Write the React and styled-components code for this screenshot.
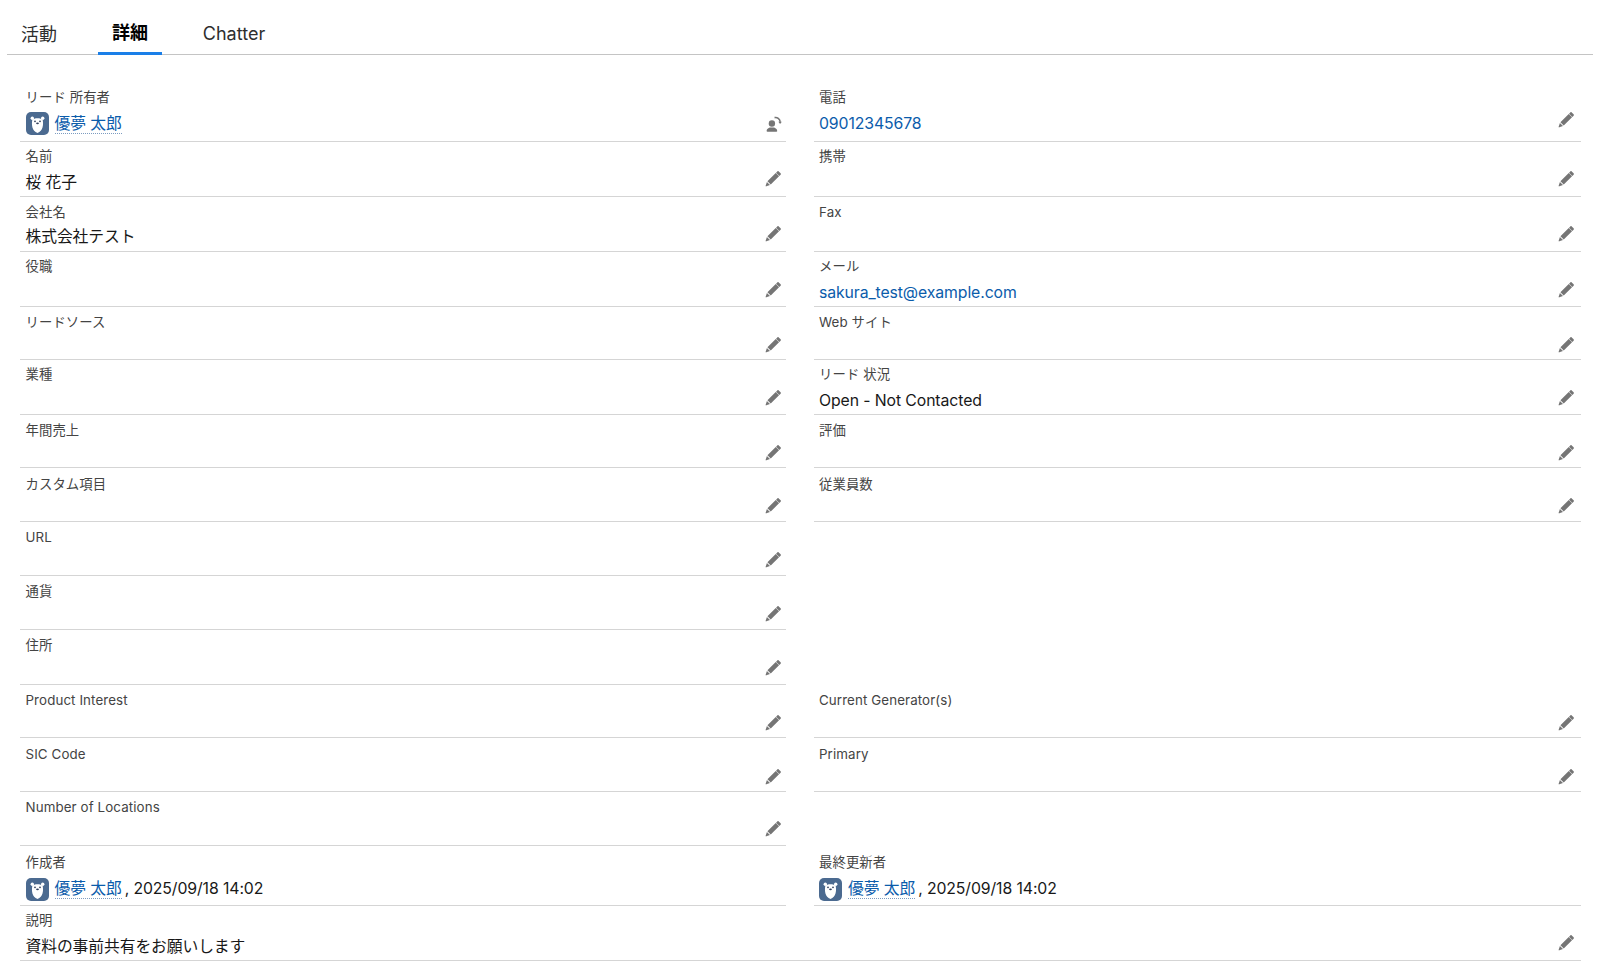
import React from 'react';
import styled, { createGlobalStyle } from 'styled-components';

const GlobalStyle = createGlobalStyle`
  html, body {
    margin: 0;
    padding: 0;
    background: #fff;
  }
  body {
    font-family: "Inter", "Liberation Sans", "Noto Sans CJK JP", sans-serif;
    color: #181818;
  }
`;

const Page = styled.div`
  width: 1600px;
  height: 969px;
  overflow: hidden;
  padding: 0 7px;
  box-sizing: border-box;
`;

const TabBar = styled.div`
  display: flex;
  height: 55px;
  box-sizing: border-box;
  padding: 0 0 0 14px;
  border-bottom: 1px solid #c4c4c4;
`;

const Tab = styled.div`
  width: ${({ $w }) => $w}px;
  height: 55px;
  box-sizing: border-box;
  display: flex;
  align-items: center;
  justify-content: ${({ $start }) => ($start ? 'flex-start' : 'center')};
  padding-top: ${({ $top }) => $top}px;
  font-size: 18px;
  color: ${({ $active }) => ($active ? '#000' : '#2e2e2e')};
  font-weight: ${({ $active }) => ($active ? 600 : 400)};
  border-bottom: ${({ $active }) => ($active ? '3px solid #1a7fe8' : 'none')};
`;

const Grid = styled.div`
  display: grid;
  grid-template-columns: 766px 767px;
  column-gap: 28px;
  padding: 28px 0 0 13px;
`;

const Row = styled.div`
  position: relative;
  height: ${({ $h }) => $h}px;
  box-sizing: border-box;
  border-bottom: ${({ $blank }) => ($blank ? 'none' : '1px solid #d5d5d5')};
  padding: ${({ $pad }) => $pad ?? 5}px 5px 0 ${({ $side }) => ($side ? 5 : 5.5)}px;
  ${({ $wide }) => $wide && 'grid-column: 1 / span 2;'}
`;

const Label = styled.div`
  font-size: 13.35px;
  letter-spacing: 0.1px;
  line-height: 18px;
  color: #444;
`;

const Value = styled.div`
  display: flex;
  align-items: center;
  font-size: 15.8px;
  letter-spacing: -0.1px;
  line-height: 24px;
  margin-top: ${({ $gap }) => $gap ?? 6}px;
  color: #181818;
`;

const Link = styled.span`
  color: #0b5cab;
`;

const OwnerLink = styled.span`
  color: #0b5cab;
  margin-left: 6px;
  border-bottom: 1px dotted #7d9cc0;
  line-height: 19px;
`;

const Stamp = styled.span`
  margin-left: 3px;
`;

const EditIcon = styled.svg`
  position: absolute;
  right: ${({ $side }) => ($side ? 6 : 4)}px;
  bottom: ${({ $bottom }) => $bottom ?? 8}px;
  width: 17px;
  height: 17px;
  fill: #757575;
`;

function Avatar() {
  return (
    <svg width="23" height="23" viewBox="0 0 23 23">
      <rect width="23" height="23" rx="5" fill="#4b6a90" />
      <circle cx="6.300" cy="6.300" r="1.700" fill="#fff" />
      <circle cx="16.700" cy="6.300" r="1.700" fill="#fff" />
      <path d="M6.300 8c1.800-2.300 8.600-2.300 10.400 0 .9 4.500.4 11-5.200 13-5.600-2-6.100-8.500-5.200-13z" fill="#fff" />
      <circle cx="9" cy="9.300" r=".9" fill="#33415c" />
      <circle cx="14" cy="9.300" r=".9" fill="#33415c" />
      <ellipse cx="11.500" cy="11.300" rx="1.400" ry=".9" fill="#33415c" />
    </svg>
  );
}

function Pencil({ side, bottom }) {
  return (
    <EditIcon viewBox="0 0 16 16" $side={side} $bottom={bottom}>
      <path d="M12.900 1.300l1.800 1.800c.4.4.4.900 0 1.300l-1.200 1.200-3.100-3.100 1.200-1.200c.4-.4.900-.4 1.300 0zM10.100 2.800l3.100 3.100-7.800 7.800-3.100-3.100zM1.800 11.300l2.900 2.900-3.500 1.200c-.4.100-.7-.2-.6-.6z" />
    </EditIcon>
  );
}

function ChangeOwner() {
  return (
    <EditIcon viewBox="0 0 16 16" $bottom={9}>
      <circle cx="6.500" cy="8" r="3" />
      <path d="M1.500 15c0-1.800 1.800-2.800 3-3.200h4c1.200.4 3 1.400 3 3.200 0 .5-.3.800-.8.800H2.300c-.5 0-.8-.3-.8-.8z" />
      <path d="M9 2.500c2.500-.5 5 1 5.300 4" fill="none" stroke="#757575" strokeWidth="1.500" />
      <path d="M12.600 6.300h3.200l-1.600 2.200z" />
    </EditIcon>
  );
}

const Person = ({ stamp, gap }) => (
  <Value $gap={gap}>
    <Avatar />
    <OwnerLink>優夢 太郎</OwnerLink>
    {stamp && <Stamp>, {stamp}</Stamp>}
  </Value>
);

// h: row height, pad: space above the label, gap: label to value, bottom: pencil offset
const rows = [
  { h: 59, bottom: 13, left: ['リード 所有者', <Person gap={6} />], icon: 'owner', right: ['電話', <Link>09012345678</Link>] },
  { h: 55, bottom: 9, left: ['名前', '桜 花子'], right: ['携帯'] },
  { h: 55, pad: 6, gap: 4, bottom: 9, left: ['会社名', '株式会社テスト'], right: ['Fax'] },
  { h: 55, left: ['役職'], right: ['メール', <Link>sakura_test@example.com</Link>] },
  { h: 53, pad: 6, bottom: 6, left: ['リードソース'], right: ['Web サイト'] },
  { h: 55, left: ['業種'], right: ['リード 状況', 'Open - Not Contacted'] },
  { h: 53, pad: 6, bottom: 6, left: ['年間売上'], right: ['評価'] },
  { h: 54, pad: 7, bottom: 7, left: ['カスタム項目'], right: ['従業員数'] },
  { h: 54, pad: 6, bottom: 7, left: ['URL'], right: null },
  { h: 54, pad: 6, bottom: 7, left: ['通貨'], right: null },
  { h: 55, pad: 6, left: ['住所'], right: null },
  { h: 53, pad: 6, bottom: 6, left: ['Product Interest'], right: ['Current Generator(s)'] },
  { h: 54, pad: 7, bottom: 6, left: ['SIC Code'], right: ['Primary'] },
  { h: 54, pad: 6, left: ['Number of Locations'], right: null },
];

function Field({ row, data, side }) {
  if (!data) return <Row $h={row.h} $blank />;
  const [label, value] = data;
  return (
    <Row $h={row.h} $pad={row.pad} $side={side}>
      <Label>{label}</Label>
      {typeof value === 'string' || value?.type === Link
        ? <Value $gap={row.gap}>{value}</Value>
        : value}
      {row.icon === 'owner' && !side ? <ChangeOwner /> : row.icon === 'none' ? null : <Pencil side={side} bottom={row.bottom} />}
    </Row>
  );
}

export default function App() {
  return (
    <>
      <GlobalStyle />
      <Page>
        <TabBar>
          <Tab $w={77} $start $top={10}>活動</Tab>
          <Tab $w={64} $active $top={10}>詳細</Tab>
          <Tab $w={144} $top={12}>Chatter</Tab>
        </TabBar>
        <Grid>
          {rows.map((r, i) => (
            <React.Fragment key={i}>
              <Field row={r} data={r.left} />
              <Field row={r} data={r.right} side />
            </React.Fragment>
          ))}
          <Field row={{ h: 60, pad: 7, icon: 'none' }} data={['作成者', <Person gap={6} stamp="2025/09/18 14:02" />]} />
          <Field row={{ h: 60, pad: 7, icon: 'none' }} data={['最終更新者', <Person gap={6} stamp="2025/09/18 14:02" />]} side />
          <Row $h={55} $wide $pad={5}>
            <Label>説明</Label>
            <Value $gap={6}>資料の事前共有をお願いします</Value>
            <Pencil side bottom={9} />
          </Row>
        </Grid>
      </Page>
    </>
  );
}
